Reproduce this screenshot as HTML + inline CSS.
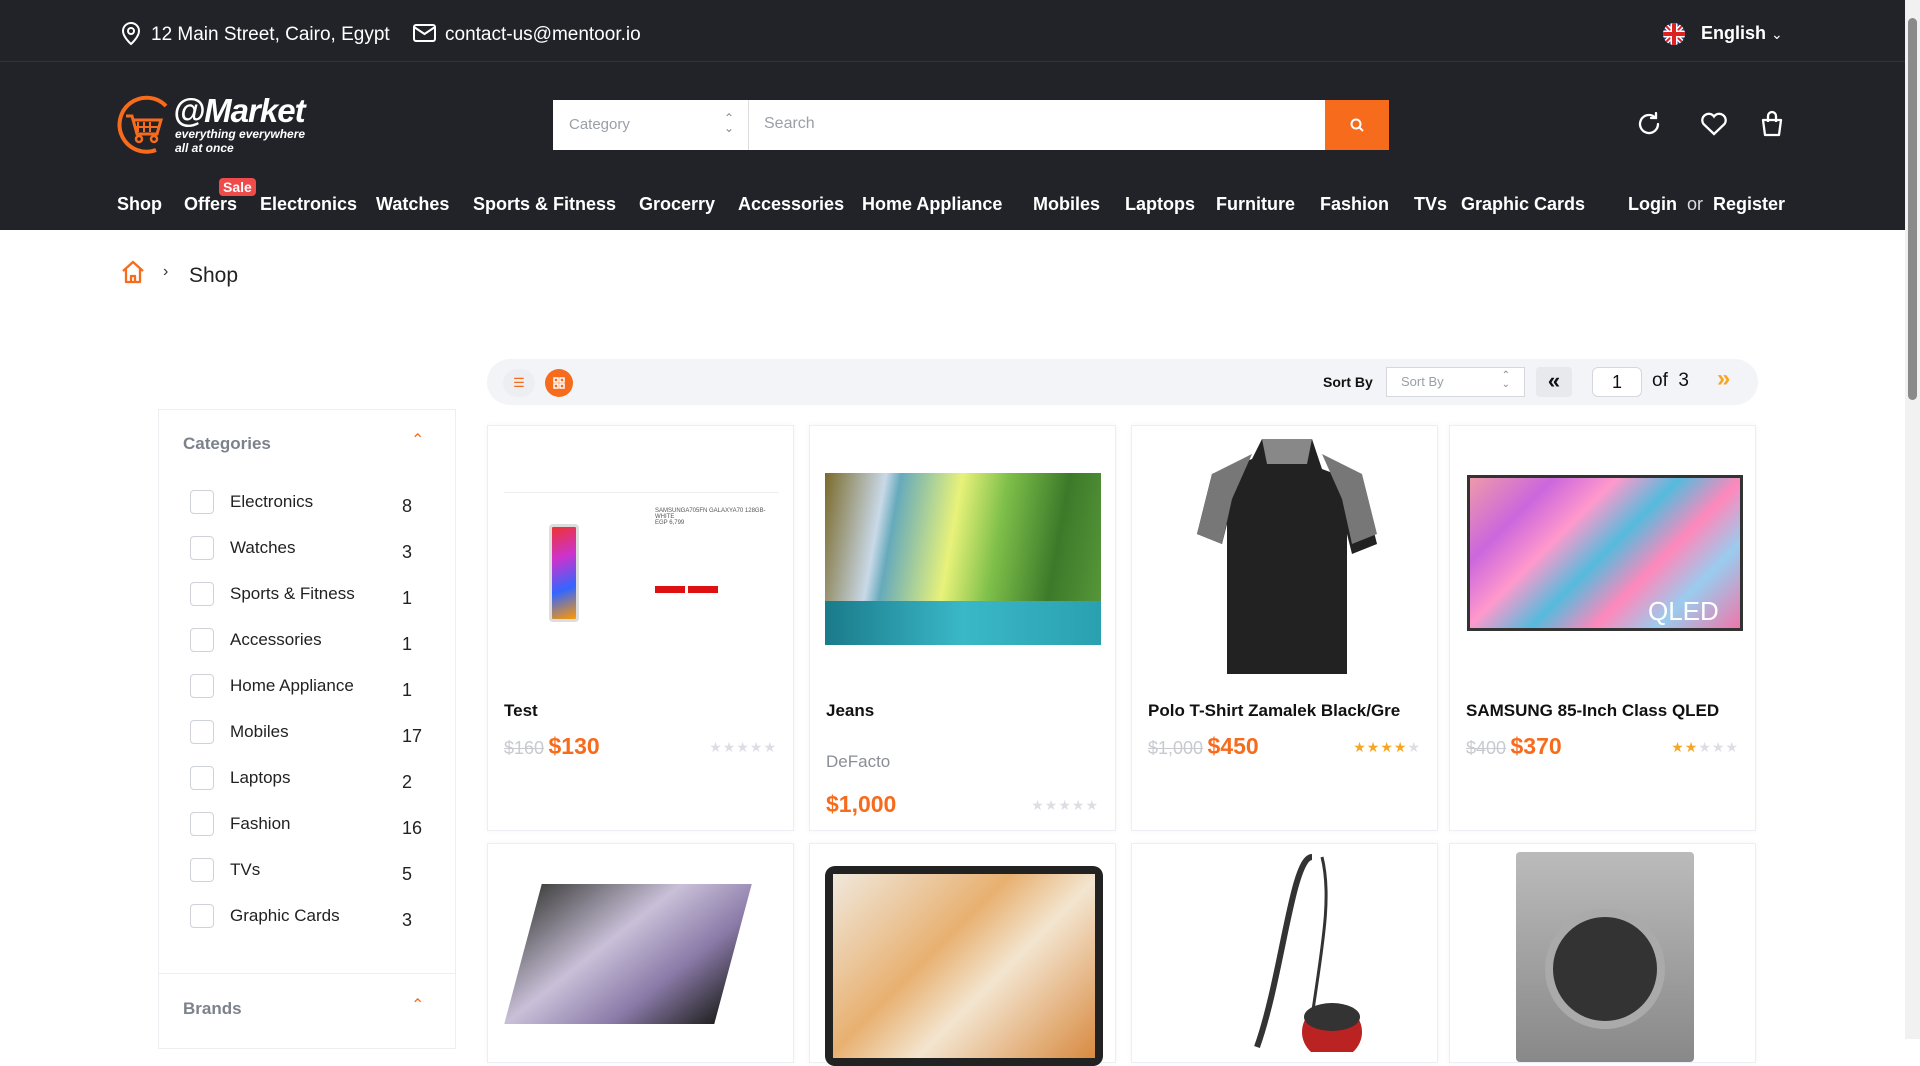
<!DOCTYPE html>
<html><head><meta charset="utf-8"><style>
*{box-sizing:border-box;margin:0;padding:0}
body{width:1920px;height:1039px;overflow:hidden;font-family:"Liberation Sans",sans-serif;background:#fff;position:relative;color:#111}
.abs{position:absolute}
.top{left:0;top:0;width:1905px;height:62px;background:#222328;border-bottom:1px solid #33343a}
.hdr{left:0;top:62px;width:1905px;height:168px;background:#222328}
.w{color:#fff}
.nav span{position:absolute;top:194px;font-size:18px;font-weight:bold;color:#fff;white-space:nowrap}
.card{position:absolute;width:307px;background:#fff;border:1px solid #eceef3;box-shadow:0 0 6px rgba(0,0,0,0.04)}
.ttl{position:absolute;left:16px;font-size:17px;font-weight:bold;color:#111}
.old{color:#c8cad0;text-decoration:line-through;font-size:18px;font-weight:normal}
.pr{color:#f76b1c;font-size:23px;font-weight:bold}
.stars{position:absolute;right:16px;font-size:14px;letter-spacing:1px;color:#dcdee3}
.st{color:#f6a623}
.cat{position:absolute;left:190px;font-size:17px;color:#222}
.cat i{position:absolute;left:0;top:-2px;width:24px;height:24px;border:1px solid #cfd2d8;border-radius:4px}
.cat span{position:absolute;left:40px;white-space:nowrap}
.cat b{position:absolute;left:212px;font-weight:normal;top:4px;font-size:18px}
</style></head><body>
<div class="abs top"></div>
<svg class="abs" style="left:120px;top:22px" width="22" height="24" viewBox="0 0 22 24" fill="none" stroke="#fff" stroke-width="2"><path d="M11 22s-8-7-8-13a8 8 0 0116 0c0 6-8 13-8 13z"/><circle cx="11" cy="9" r="3"/></svg>
<div class="abs w" style="left:151px;top:24px;font-size:19px">12 Main Street, Cairo, Egypt</div>
<svg class="abs" style="left:413px;top:24px" width="23" height="18" viewBox="0 0 23 18" fill="none" stroke="#fff" stroke-width="2"><rect x="1" y="1" width="21" height="16" rx="2"/><path d="M1 3l10.5 7L22 3"/></svg>
<div class="abs w" style="left:445px;top:24px;font-size:19px">contact-us@mentoor.io</div>
<svg class="abs" style="left:1662px;top:22px" width="24" height="24" viewBox="0 0 24 24"><clipPath id="c"><circle cx="12" cy="12" r="11"/></clipPath><g clip-path="url(#c)"><rect width="24" height="24" fill="#2b3a8f"/><path d="M0 0L24 24M24 0L0 24" stroke="#fff" stroke-width="5"/><path d="M0 0L24 24M24 0L0 24" stroke="#d22" stroke-width="2"/><path d="M12 0V24M0 12H24" stroke="#fff" stroke-width="7"/><path d="M12 0V24M0 12H24" stroke="#d22" stroke-width="4"/></g></svg>
<div class="abs w" style="left:1701px;top:23px;font-size:18px;font-weight:bold">English <span style="font-weight:normal;font-size:14px">&#8964;</span></div>
<div class="abs hdr"></div>
<svg class="abs" style="left:116px;top:94px" width="62" height="62" viewBox="0 0 62 62" fill="none" stroke="#f76b1c" stroke-width="4"><path d="M50 12A27 27 0 1 0 40 56"/><path d="M10 22h6l5 18h20l4-14H18" stroke-width="3"/><path d="M22 28v10M28 28v10M34 28v10M19 33h24" stroke-width="2"/><circle cx="23" cy="45" r="3" stroke-width="2.5"/><circle cx="38" cy="45" r="3" stroke-width="2.5"/></svg>
<div class="abs w" style="left:173px;top:92px;font-size:33px;font-weight:bold;font-style:italic;letter-spacing:-1px">@Market</div>
<div class="abs w" style="left:175px;top:127px;font-size:12px;font-weight:bold;font-style:italic;line-height:14px">everything everywhere<br>all at once</div>
<div class="abs" style="left:553px;top:100px;width:196px;height:50px;background:#fff;border-right:1px solid #ddd"><span style="position:absolute;left:16px;top:16px;font-size:15px;color:#9aa0a8">Category</span><span style="position:absolute;right:14px;top:13px;font-size:12px;color:#888;line-height:10px">&#8963;<br>&#8964;</span></div>
<div class="abs" style="left:749px;top:100px;width:576px;height:50px;background:#fff"><span style="position:absolute;left:15px;top:15px;font-size:16px;color:#9aa0a8">Search</span></div>
<div class="abs" style="left:1325px;top:100px;width:64px;height:50px;background:#f76b1c"><svg style="position:absolute;left:25px;top:18px" width="15" height="15" viewBox="0 0 15 15" fill="none" stroke="#fff" stroke-width="2"><circle cx="6" cy="6" r="4.5"/><path d="M9.5 9.5L13 13"/></svg></div>
<svg class="abs" style="left:1636px;top:111px" width="26" height="26" viewBox="0 0 26 26" fill="none" stroke="#fff" stroke-width="2.3" stroke-linecap="round"><path d="M22 13a9 9 0 1 1-3-6.7"/><path d="M20 2v5h-5"/></svg>
<svg class="abs" style="left:1700px;top:112px" width="28" height="24" viewBox="0 0 28 24" fill="none" stroke="#fff" stroke-width="2.3"><path d="M14 22L3.5 12A6 6 0 0 1 14 4.5 6 6 0 0 1 24.5 12z"/></svg>
<svg class="abs" style="left:1760px;top:110px" width="24" height="28" viewBox="0 0 24 28" fill="none" stroke="#fff" stroke-width="2.3" stroke-linejoin="round"><path d="M3 10h18l-2 15H5z"/><path d="M8 12V6a4 4 0 0 1 8 0v6"/></svg>
<div class="nav">
<span style="left:117px">Shop</span><span style="left:184px">Offers</span><span style="left:260px">Electronics</span><span style="left:376px">Watches</span><span style="left:473px">Sports &amp; Fitness</span><span style="left:639px">Grocerry</span><span style="left:738px">Accessories</span><span style="left:862px">Home Appliance</span><span style="left:1033px">Mobiles</span><span style="left:1125px">Laptops</span><span style="left:1216px">Furniture</span><span style="left:1320px">Fashion</span><span style="left:1414px">TVs</span><span style="left:1461px">Graphic Cards</span><span style="left:1628px">Login <span style="position:static;font-weight:normal;color:#ddd">&nbsp;or&nbsp;</span> Register</span>
</div>
<div class="abs" style="left:219px;top:178px;background:#ef4b4b;color:#fff;font-size:14px;padding:1px 4px;border-radius:4px;font-weight:bold">Sale</div>
<svg class="abs" style="left:120px;top:259px" width="26" height="26" viewBox="0 0 26 26" fill="none" stroke="#f76b1c" stroke-width="2.3" stroke-linejoin="round"><path d="M3 12L13 3l10 9"/><path d="M6 10v13h14V10"/><path d="M11 23v-6h4v6"/></svg>
<div class="abs" style="left:163px;top:263px;font-size:16px;color:#333">&#8250;</div>
<div class="abs" style="left:189px;top:264px;font-size:21px;color:#222">Shop</div>
<div class="abs" style="left:487px;top:359px;width:1271px;height:46px;background:#f3f4f8;border-radius:23px"></div>
<div class="abs" style="left:503px;top:369px;width:32px;height:28px;border-radius:14px;background:#eceef2;color:#f76b1c;text-align:center;font-size:13px;line-height:28px">&#9776;</div>
<div class="abs" style="left:545px;top:369px;width:28px;height:28px;border-radius:14px;background:#f76b1c"><svg style="position:absolute;left:8px;top:8px" width="12" height="12" viewBox="0 0 12 12" fill="none" stroke="#fff" stroke-width="1.5"><rect x="1" y="1" width="4" height="4"/><rect x="7" y="1" width="4" height="4"/><rect x="1" y="7" width="4" height="4"/><rect x="7" y="7" width="4" height="4"/></svg></div>
<div class="abs" style="left:1323px;top:374px;font-size:14px;font-weight:bold;color:#111">Sort By</div>
<div class="abs" style="left:1386px;top:367px;width:139px;height:30px;border:1px solid #d5d7dc;background:#fff"><span style="position:absolute;left:14px;top:6px;font-size:13px;color:#9aa0a8">Sort By</span><span style="position:absolute;right:14px;top:3px;font-size:10px;color:#888;line-height:9px">&#8963;<br>&#8964;</span></div>
<div class="abs" style="left:1536px;top:367px;width:36px;height:30px;background:#e8e9ed;border-radius:4px;text-align:center;font-size:22px;font-weight:bold;line-height:28px">&#171;</div>
<div class="abs" style="left:1592px;top:367px;width:50px;height:30px;background:#fff;border:1px solid #d5d7dc;border-radius:6px;text-align:center;font-size:18px;line-height:28px">1</div>
<div class="abs" style="left:1652px;top:370px;font-size:19px">of&nbsp; 3</div>
<div class="abs" style="left:1717px;top:365px;font-size:24px;font-weight:bold;color:#f6a623">&#187;</div>
<div class="abs" style="left:158px;top:409px;width:298px;height:640px;border:1px solid #eceef1"></div>
<div class="abs" style="left:158px;top:973px;width:298px;height:1px;background:#eceef1"></div>
<div class="abs" style="left:183px;top:434px;font-size:17px;font-weight:bold;color:#7c828c">Categories</div>
<div class="abs" style="left:411px;top:430px;font-size:16px;color:#f76b1c">&#8963;</div>
<div class="abs" style="left:183px;top:999px;font-size:17px;font-weight:bold;color:#7c828c">Brands</div>
<div class="abs" style="left:411px;top:995px;font-size:16px;color:#f76b1c">&#8963;</div>
<div class="cat" style="top:492px"><i></i><span>Electronics</span><b>8</b></div>
<div class="cat" style="top:538px"><i></i><span>Watches</span><b>3</b></div>
<div class="cat" style="top:584px"><i></i><span>Sports &amp; Fitness</span><b>1</b></div>
<div class="cat" style="top:630px"><i></i><span>Accessories</span><b>1</b></div>
<div class="cat" style="top:676px"><i></i><span>Home Appliance</span><b>1</b></div>
<div class="cat" style="top:722px"><i></i><span>Mobiles</span><b>17</b></div>
<div class="cat" style="top:768px"><i></i><span>Laptops</span><b>2</b></div>
<div class="cat" style="top:814px"><i></i><span>Fashion</span><b>16</b></div>
<div class="cat" style="top:860px"><i></i><span>TVs</span><b>5</b></div>
<div class="cat" style="top:906px"><i></i><span>Graphic Cards</span><b>3</b></div>

<div class="card" style="left:487px;top:425px;height:406px">
 <div class="abs" style="left:16px;top:66px;width:275px;height:1px;background:#eee"></div>
 <div class="abs" style="left:61px;top:98px;width:30px;height:98px;border-radius:4px;background:linear-gradient(160deg,#e33,#c3c,#36f,#f90);border:3px solid #ddd"></div>
 <div class="abs" style="left:167px;top:82px;font-size:6px;color:#555;width:120px">SAMSUNGA705FN GALAXYA70 128GB-WHITE<br>EGP 6,799</div>
 <div class="abs" style="left:167px;top:160px;width:30px;height:7px;background:#d11"></div><div class="abs" style="left:200px;top:160px;width:30px;height:7px;background:#d11"></div>
 <div class="ttl" style="top:275px">Test</div>
 <div class="abs" style="left:16px;top:307px"><span class="old">$160</span> <span class="pr">$130</span></div>
 <div class="stars" style="top:313px">★★★★★</div>
</div>
<div class="card" style="left:809px;top:425px;height:406px">
 <div class="abs" style="left:15px;top:47px;width:276px;height:172px;background:linear-gradient(100deg,#7a6a2a 0%,#c9d9e8 20%,#6ab 25%,#e8f27a 45%,#7fc04a 60%,#3c7a2a 80%,#5a9a3a);"></div>
 <div class="abs" style="left:15px;top:175px;width:276px;height:44px;background:linear-gradient(90deg,#1a7a8a,#3ab8c8,#2aa0b0)"></div>
 <div class="ttl" style="top:275px">Jeans</div>
 <div class="abs" style="left:16px;top:326px;font-size:17px;color:#8a8e96">DeFacto</div>
 <div class="abs pr" style="left:16px;top:365px">$1,000</div>
 <div class="stars" style="top:371px">★★★★★</div>
</div>
<div class="card" style="left:1131px;top:425px;height:406px">
 <svg class="abs" style="left:60px;top:8px" width="190" height="248" viewBox="0 0 190 248"><path d="M70 5h50l10 30 40 15 15 60-25 10-5-20v140H35V90l-5 20-25-10 15-60 40-15z" fill="#222"/><path d="M60 20l-40 20-15 60 25 10 10-45zM130 20l40 20 15 60-25 10-10-45z" fill="#777"/><path d="M70 5h50l-5 25H75z" fill="#888"/></svg>
 <div class="ttl" style="top:275px">Polo T-Shirt Zamalek Black/Gre</div>
 <div class="abs" style="left:16px;top:307px"><span class="old">$1,000</span> <span class="pr">$450</span></div>
 <div class="stars" style="top:313px"><span class="st">★★★★</span>★</div>
</div>
<div class="card" style="left:1449px;top:425px;height:406px">
 <div class="abs" style="left:17px;top:49px;width:276px;height:156px;background:#333;padding:3px"><div style="width:100%;height:100%;background:linear-gradient(135deg,#e9a 0%,#c6d 20%,#f9c 35%,#5bd 50%,#f8b 65%,#9ce 80%,#e7a 100%)"></div></div>
 <div class="abs" style="left:198px;top:170px;color:#fff;font-size:26px">QLED</div>
 <div class="ttl" style="top:275px">SAMSUNG 85-Inch Class QLED</div>
 <div class="abs" style="left:16px;top:307px"><span class="old">$400</span> <span class="pr">$370</span></div>
 <div class="stars" style="top:313px"><span class="st">★★</span>★★★</div>
</div>
<div class="card" style="left:487px;top:843px;height:220px"><div class="abs" style="left:35px;top:40px;width:210px;height:140px;background:linear-gradient(135deg,#444,#c9c0d8 40%,#8a7aa8 70%,#222);transform:skewX(-15deg)"></div></div>
<div class="card" style="left:809px;top:843px;height:220px"><div class="abs" style="left:15px;top:22px;width:278px;height:200px;background:#222;border-radius:10px;padding:8px"><div style="width:100%;height:100%;background:linear-gradient(135deg,#f0e8dc,#e8b070 40%,#f3e5d0 60%,#d88a40)"></div></div></div>
<div class="card" style="left:1131px;top:843px;height:220px"><svg class="abs" style="left:110px;top:8px" width="120" height="200" viewBox="0 0 120 200" fill="none"><path d="M70 5c-20 0-30 120-55 190" stroke="#333" stroke-width="6"/><path d="M80 5c10 40 0 90-10 160" stroke="#333" stroke-width="3"/><ellipse cx="90" cy="180" rx="30" ry="28" fill="#b22"/><ellipse cx="90" cy="165" rx="28" ry="14" fill="#333"/></svg></div>
<div class="card" style="left:1449px;top:843px;height:220px"><div class="abs" style="left:66px;top:8px;width:178px;height:210px;background:linear-gradient(#bbb,#888);border-radius:4px"></div><div class="abs" style="left:95px;top:65px;width:120px;height:120px;border-radius:60px;background:#333;border:8px solid #aaa"></div></div>
<div class="abs" style="left:1905px;top:0;width:15px;height:1039px;background:#f1f1f1"></div>
<div class="abs" style="left:1908px;top:18px;width:9px;height:382px;background:#8a8a8a;border-radius:5px"></div>
</body></html>
